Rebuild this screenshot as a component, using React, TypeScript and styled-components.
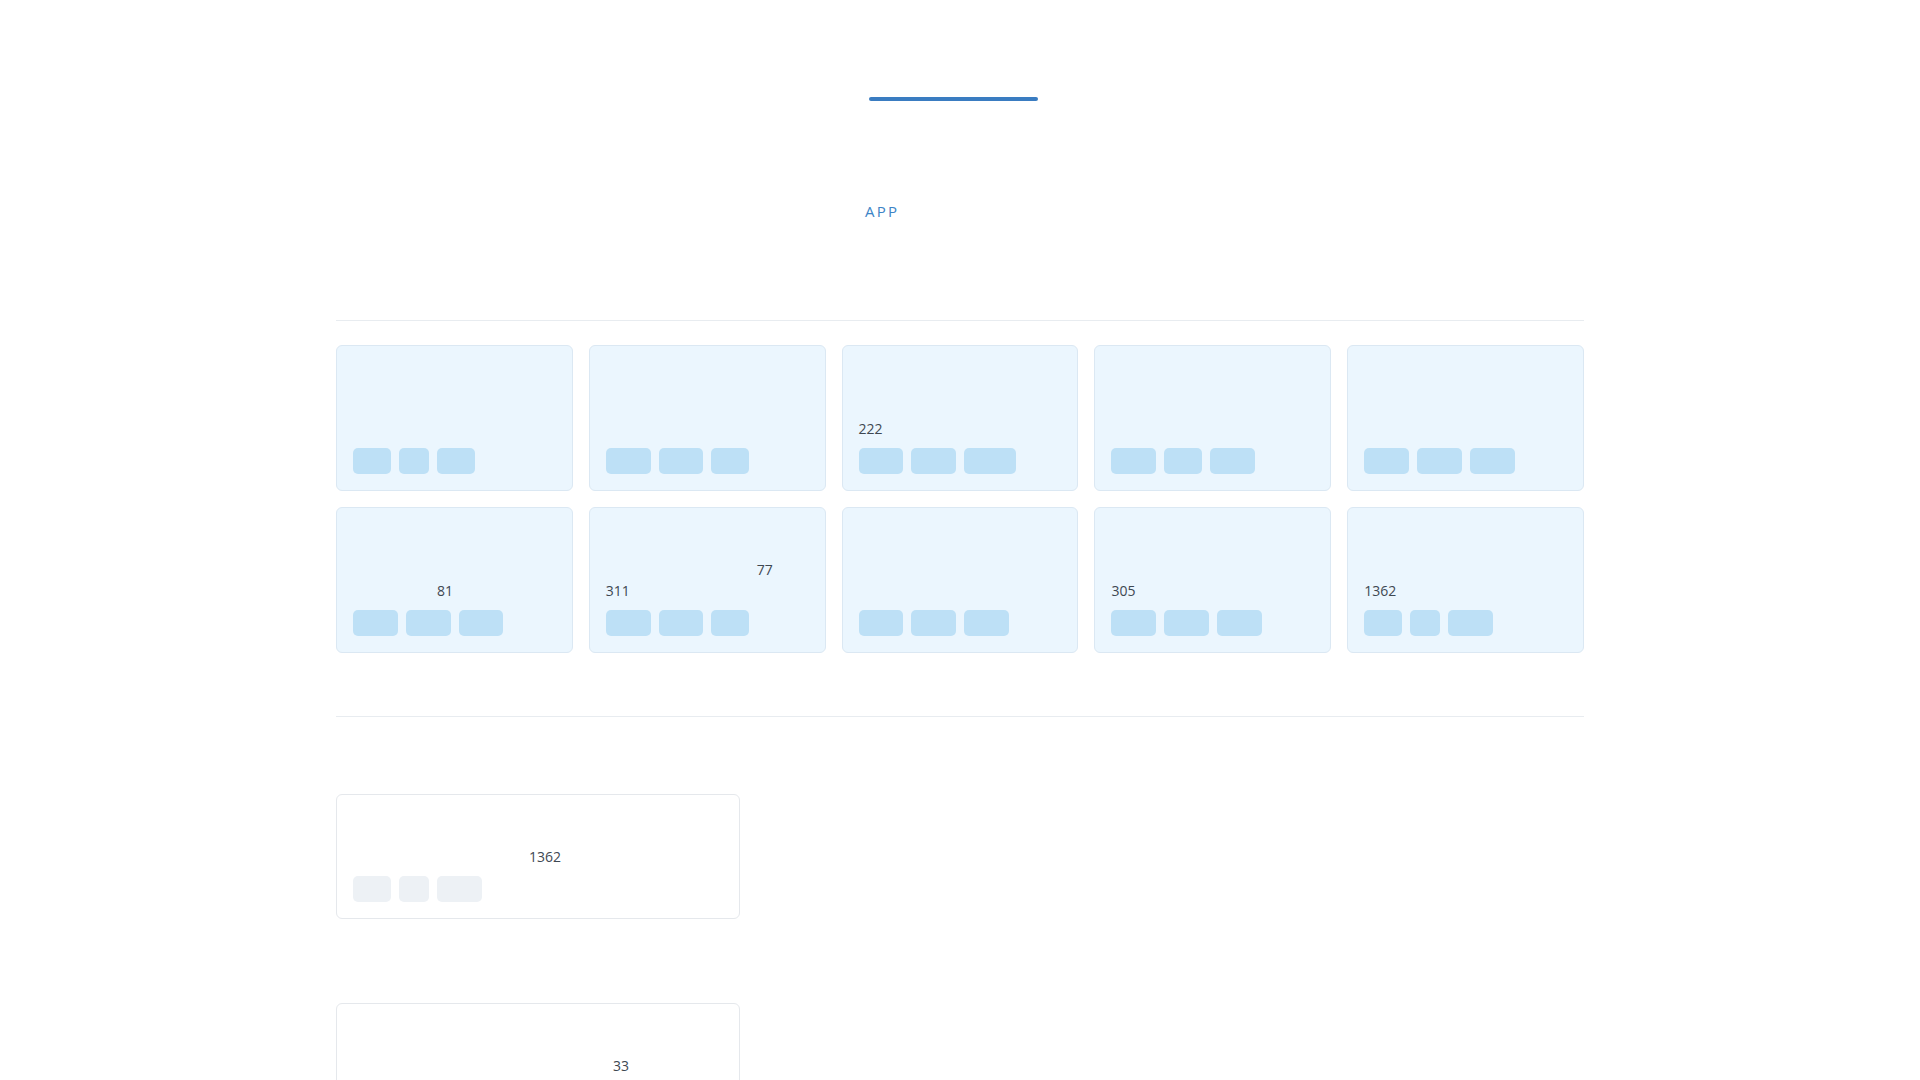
import React from 'react';
import styled, {createGlobalStyle} from "styled-components";

type LabelType = {
	text: string
	offset: number
}

type TileType = {
	chips: number[]
	labels?: LabelType[]
}

const boardTiles: TileType[] = [
	{chips: [38, 30, 38]},
	{chips: [45, 44, 38]},
	{chips: [44, 45, 52], labels: [{text: '222', offset: 0}]},
	{chips: [45, 38, 45]},
	{chips: [45, 45, 45]},
	{chips: [45, 45, 44], labels: [{text: '81', offset: 84}]},
	{chips: [45, 44, 38], labels: [{text: '77', offset: 151}, {text: '311', offset: 0}]},
	{chips: [44, 45, 45]},
	{chips: [45, 45, 45], labels: [{text: '305', offset: 0}]},
	{chips: [38, 30, 45], labels: [{text: '1362', offset: 0}]},
]

const listTiles: TileType[] = [
	{chips: [38, 30, 45], labels: [{text: '1362', offset: 176}]},
	{chips: [38, 30, 45], labels: [{text: '33', offset: 260}]},
]

const Tile = (props: TileType & {plain?: boolean}) => {
	return (
		<TileBox $plain={props.plain}>
			{props.labels && (
				<Labels>
					{props.labels.map((l, i) => (
						<Label key={i} $offset={l.offset}>{l.text}</Label>
					))}
				</Labels>
			)}
			<Chips>
				{props.chips.map((w, i) => (
					<Chip key={i} $width={w} $plain={props.plain}/>
				))}
			</Chips>
		</TileBox>
	);
};

export default function App() {
	return (
		<>
			<GlobalStyle/>
			<Page>
				<Header>
					<Bar/>
					<Title>APP</Title>
				</Header>
				<Divider/>
				<Board>
					{boardTiles.map((t, i) => (
						<Tile key={i} chips={t.chips} labels={t.labels}/>
					))}
				</Board>
				<Divider $top={63}/>
				<List>
					{listTiles.map((t, i) => (
						<Tile key={i} chips={t.chips} labels={t.labels} plain/>
					))}
				</List>
			</Page>
		</>
	);
}

const GlobalStyle = createGlobalStyle`
  html, body {
    margin: 0;
    padding: 0;
    background: #ffffff;
    font-family: 'Open Sans', 'Noto Sans', sans-serif;
  }
`

const Page = styled.div`
  width: 1248px;
  margin: 0 auto;
  padding-bottom: 40px;
`

const Header = styled.header`
  width: 190px;
  margin: 0 auto;
  padding-top: 97px;
  display: flex;
  flex-direction: column;
  align-items: flex-start;
`

const Bar = styled.div`
  width: 169px;
  height: 4px;
  margin-left: 4px;
  border-radius: 2px;
  background: #3a7cc1;
`

const Title = styled.div`
  margin-top: 100px;
  font-size: 15px;
  line-height: 20px;
  letter-spacing: 2.2px;
  color: #3d84c6;
`

const Divider = styled.div<{$top?: number}>`
  height: 1px;
  margin-top: ${p => p.$top ?? 99}px;
  background: #e8ecf0;
`

const Board = styled.div`
  margin-top: 24px;
  display: grid;
  grid-template-columns: repeat(5, 1fr);
  gap: 16px;
`

const List = styled.div`
  margin-top: 77px;
  width: 404px;
  display: flex;
  flex-direction: column;
  gap: 84px;
`

const TileBox = styled.div<{$plain?: boolean}>`
  box-sizing: border-box;
  height: ${p => p.$plain ? 125 : 146}px;
  padding: 0 16px 16px;
  display: flex;
  flex-direction: column;
  justify-content: flex-end;
  border: 1px solid ${p => p.$plain ? '#e5e8ec' : '#dbe8f3'};
  border-radius: 6px;
  background: ${p => p.$plain ? '#ffffff' : '#ebf6fe'};
`

const Labels = styled.div`
  display: flex;
  flex-direction: column;
  margin-bottom: 9px;
`

const Label = styled.div<{$offset: number}>`
  margin-left: ${p => p.$offset}px;
  font-size: 14px;
  line-height: 21px;
  color: #3e4852;
`

const Chips = styled.div`
  display: flex;
  gap: 8px;
`

const Chip = styled.div<{$width: number, $plain?: boolean}>`
  width: ${p => p.$width}px;
  height: 26px;
  border-radius: 5px;
  background: ${p => p.$plain ? '#edf1f5' : '#bde0f6'};
`
